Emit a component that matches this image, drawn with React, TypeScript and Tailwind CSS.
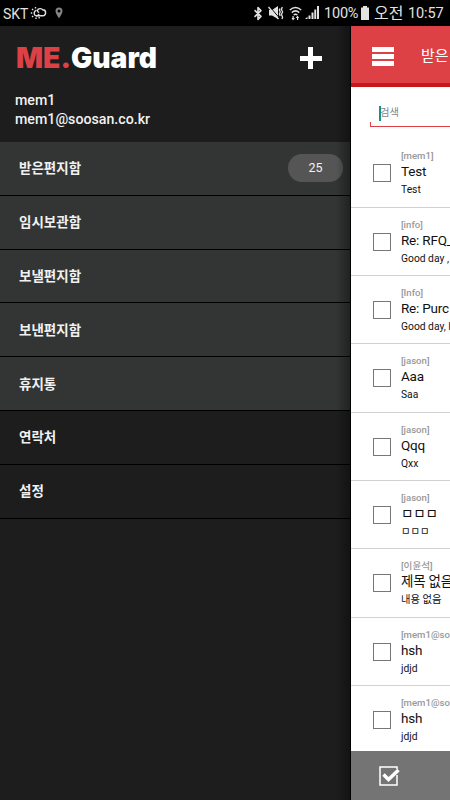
import React from 'react';
import { Bluetooth } from 'lucide-react';

interface Mail {
  from: string;
  title: string;
  body: string;
}

const folders = [
  { label: '받은편지함', count: 25 },
  { label: '임시보관함' },
  { label: '보낼편지함' },
  { label: '보낸편지함' },
  { label: '휴지통' },
  { label: '연락처', dark: true },
  { label: '설정', dark: true },
];

const mails: Mail[] = [
  { from: '[mem1]', title: 'Test', body: 'Test' },
  { from: '[info]', title: 'Re: RFQ_', body: 'Good day ,' },
  { from: '[Info]', title: 'Re: Purc', body: 'Good day, I' },
  { from: '[jason]', title: 'Aaa', body: 'Saa' },
  { from: '[jason]', title: 'Qqq', body: 'Qxx' },
  { from: '[jason]', title: 'ㅁㅁㅁ', body: 'ㅁㅁㅁ' },
  { from: '[이윤석]', title: '제목 없음', body: '내용 없음' },
  { from: '[mem1@so', title: 'hsh', body: 'jdjd' },
  { from: '[mem1@so', title: 'hsh', body: 'jdjd' },
];

const StatusBar: React.FC = () => (
  <div className="flex h-[26px] shrink-0 items-center bg-black text-[#e2e2e2] whitespace-nowrap">
    <span className="mt-px ml-[3px] w-[27px] text-[14px] leading-[18px]">SKT</span>
    {/* Weather */}
    <svg width="17" height="14" viewBox="0 0 17 14" fill="none" stroke="currentColor" strokeWidth="1.4">
      <path d="M6 9.8H12.4A3 3 0 0 0 12.8 3.8A3.4 3.4 0 0 0 8 3.4C6.8 4.5 7.7 6.4 9.2 6.2" />
      <path d="M6.5 4.2A3 3 0 0 0 5 9.2A2.5 2.5 0 0 0 9 8" />
      <path d="M0.8 7H2.2M2 3L3.2 4M5.5 1V2.4M2 11L3.2 10M6 13V11.5M9.5 12.3L8.8 11.2" />
    </svg>
    <svg className="ml-2 text-[#858585]" width="8" height="12" viewBox="0 0 8 12" fill="currentColor" fillRule="evenodd">
      <path d="M4 .5A3.5 3.5 0 0 0 .5 4C.5 6.5 4 11.3 4 11.3S7.5 6.5 7.5 4A3.5 3.5 0 0 0 4 .5ZM4 2.5A1.5 1.5 0 1 1 4 5.5A1.5 1.5 0 0 1 4 2.5Z" />
    </svg>
    <div className="ml-auto flex items-center">
      <Bluetooth className="h-[15px] w-[14px]" strokeWidth={2.8} />
      {/* Muted, vibrating */}
      <svg className="ml-[3px]" width="16" height="14" viewBox="0 0 16 14">
        <path d="M1 4H4L10 0V13L4 9.5H1Z" fill="currentColor" />
        <path d="M2 1L11 11.5" stroke="#000" strokeWidth="1" />
        <path d="M.5 1L10.5 13" stroke="currentColor" strokeWidth="1.3" />
        <path d="M12 2.5L11.4 4L12.2 6L11.4 8L12.2 10M14.3 1L13.4 3.5L14.6 6L13.4 8.5L14.6 11L14 13" fill="none" stroke="currentColor" strokeWidth="1.3" />
      </svg>
      {/* Wifi */}
      <svg className="ml-[5px]" width="13" height="15" viewBox="0 0 13 15" fill="none" stroke="currentColor" strokeWidth="1.5">
        <path d="M.8 4Q6.5-1 12.2 4M2.8 6.6Q6.5 3.2 10.2 6.6M4.7 9Q6.5 7.5 8.3 9" />
        <path d="M4.7 10V12H6L4 14.5L2.5 12H3.5V10ZM8 14V12H6.7L8.5 9.5L10.2 12H9.2V14Z" fill="currentColor" stroke="none" />
      </svg>
      {/* Signal */}
      <svg className="ml-[3px]" width="14" height="14" viewBox="0 0 14 14" fill="currentColor">
        <path d="M0 13L2.5 10.8V13ZM3.5 9.5H5.5V13H3.5ZM6.5 6.5H8.5V13H6.5ZM9.3 3.5H11.2V13H9.3ZM12 0H14V13H12Z" />
      </svg>
      <span className="mt-px ml-[5px] w-[36px] text-[14.5px] leading-[18px] tracking-[-0.2px]">100%</span>
      <svg width="10" height="14" viewBox="0 0 10 14" fill="currentColor">
        <path d="M3 0H7V1.5H9V14H1V1.5H3Z" />
      </svg>
      <span className="mt-px ml-[4px] w-[31px] text-[16px] leading-[20px]">오전</span>
      <span className="mt-px mr-[6px] ml-[3px] w-[36px] text-[14.5px] leading-[18px] tracking-[-0.1px]">10:57</span>
    </div>
  </div>
);

const Drawer: React.FC = () => (
  <aside className="relative flex w-[351px] shrink-0 flex-col border-r border-black bg-[#1d1d1d] text-[#f1f1f1]">
    <div className="flex h-[64px] items-center pr-[28px] pl-[16px]">
      <svg className="overflow-visible" width="144" height="40" viewBox="0 0 144 40" fontFamily="Inter" fontWeight="900" fontSize="28">
        <text x="0" y="30" fill="#dd4146" textLength="55" lengthAdjust="spacingAndGlyphs">ME.</text>
        <text x="55" y="30" fill="#fff" textLength="86" lengthAdjust="spacingAndGlyphs">Guard</text>
      </svg>
      <svg className="ml-auto" width="23" height="23" viewBox="0 0 23 23" fill="#fff">
        <path d="M9 0H14V9H23V14H14V22H9V14H1V9H9Z" />
      </svg>
    </div>
    <div className="h-[52px] pt-px pl-[15px] text-[14.2px] leading-[19px] font-medium">
      <div>mem1</div>
      <div>mem1@soosan.co.kr</div>
    </div>
    <nav>
      {folders.map((folder) => (
        <div
          key={folder.label}
          className={`flex h-[53.83px] items-center border-b border-black pr-[7px] pl-[19px] text-[13.5px] font-bold ${
            folder.dark ? 'bg-[#1d1d1d]' : 'bg-[#323534]'
          }`}
        >
          <span>{folder.label}</span>
          {folder.count && (
            <span className="ml-auto flex h-[28px] w-[55px] items-center justify-center rounded-full bg-[#555] text-[12.5px] font-normal">
              {folder.count}
            </span>
          )}
        </div>
      ))}
    </nav>
    {/* Edge shade */}
    <div className="absolute inset-y-0 right-0 w-[14px] bg-gradient-to-r from-transparent to-black/35" />
  </aside>
);

const MailRow: React.FC<{ mail: Mail }> = ({ mail }) => (
  <div className="flex h-[68.35px] shrink-0 border-b border-[#d2d2d2] pl-[22px] whitespace-nowrap text-[#111]">
    <div className="mt-[25px] h-[18px] w-[18px] shrink-0 border border-[#777]" />
    <div className="ml-[10px] pt-[11px]">
      <div className="h-[12px] text-[9.6px] leading-[12px] font-medium text-[#999]">{mail.from}</div>
      <div className="h-[20px] text-[13.5px] leading-[19px] tracking-[-0.2px]">{mail.title}</div>
      <div className="h-[16px] text-[10.3px] leading-[16px]">{mail.body}</div>
    </div>
  </div>
);

const Inbox: React.FC = () => (
  <main className="flex w-[99px] shrink-0 flex-col overflow-hidden bg-white">
    <header className="flex h-[61px] shrink-0 items-center border-b-4 border-[#c7171c] bg-[#dd4146] pt-[4px] pl-[21px] whitespace-nowrap text-white">
      <svg className="shrink-0" width="22" height="20" viewBox="0 0 22 20" fill="#fff">
        <path d="M0 0H22V5H0ZM0 7H22V12H0ZM0 14H22V19H0Z" />
      </svg>
      <span className="ml-[27px] text-[15px]">받은</span>
    </header>
    <div className="h-[52.3px] shrink-0 pt-[17px] pl-[19px]">
      <div className="relative flex h-[23px] items-center border-b border-[#dd4146] pb-[4px] pl-[9px]">
        <span className="h-[15px] w-[2px] bg-[#129488]" />
        <span className="-ml-px text-[10.3px] text-[#858585]">검색</span>
        <span className="absolute bottom-0 left-0 h-[4px] w-px bg-[#dd4146]" />
      </div>
    </div>
    <div className="min-h-0 flex-1 overflow-hidden">
      {mails.map((mail, i) => (
        <MailRow key={i} mail={mail} />
      ))}
    </div>
    <footer className="flex h-[49px] shrink-0 items-center bg-[#747474] pl-[28px]">
      <svg width="22" height="20" viewBox="0 0 22 20" fill="none" stroke="#fff">
        <path d="M18 9V19H1V1H18V3" strokeWidth="1.5" />
        <path d="M4.5 8.5L9.5 13.5L19.5 4" strokeWidth="3.5" />
      </svg>
    </footer>
  </main>
);

export default function App() {
  return (
    <div className="flex h-[800px] w-[450px] flex-col overflow-hidden bg-black font-['Roboto','Noto_Sans_CJK_KR',sans-serif]">
      <StatusBar />
      <div className="flex min-h-0 flex-1">
        <Drawer />
        <Inbox />
      </div>
    </div>
  );
}
